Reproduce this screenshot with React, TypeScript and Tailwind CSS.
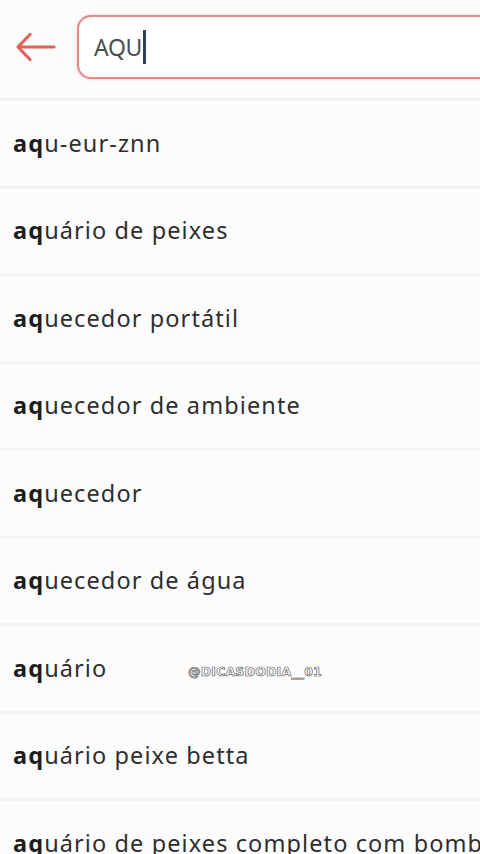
import React from "react";

const suggestions = [
    "aqu-eur-znn",
    "aquário de peixes",
    "aquecedor portátil",
    "aquecedor de ambiente",
    "aquecedor",
    "aquecedor de água",
    "aquário",
    "aquário peixe betta",
    "aquário de peixes completo com bomba",
];

const BackArrow = () => (
    <svg width="44" height="32" viewBox="0 0 44 32" fill="none">
        <path
            d="M40 16H4M16 3.5L4 16l12 12.5"
            stroke="#e2615b"
            strokeWidth="3.2"
            strokeLinecap="round"
            strokeLinejoin="round"
        />
    </svg>
);

const App = () => {
    return (
        <div
            className="relative w-[480px] h-[854px] overflow-hidden bg-[#fdfcfd]"
            style={{ fontFamily: '"Noto Sans", "Open Sans", sans-serif' }}
        >
            <div className="flex items-center h-[98px] pl-[14px] pb-[4px]">
                <BackArrow />
                <div className="ml-[19px] flex-1 h-[64px] -mr-[20px] rounded-[14px] border-2 border-[#e38c86] shadow-[0_0_3px_rgba(230,120,120,0.35)] bg-white flex items-center pl-[15px]">
                    <span className="text-[23px] text-[#4e4e4e] tracking-[-0.3px]">AQU</span>
                    <span className="w-[3px] h-[34px] bg-[#34405a] ml-[1px]" />
                </div>
            </div>
            <div className="flex flex-col">
                {suggestions.map((item, index) => (
                    <div
                        key={index}
                        className="h-[87.5px] shrink-0 border-t-[3px] border-[#f4f2f5] flex items-center pl-[13px] whitespace-nowrap"
                    >
                        <span className="text-[23.5px] tracking-[1.1px] text-[#2e2e2e]">
                            <span className="font-bold text-[#1d1d1d]">aq</span>
                            {item.slice(2)}
                        </span>
                    </div>
                ))}
            </div>
            <div
                className="absolute left-[188px] top-[663px] text-[12.5px] font-bold text-white tracking-[0.2px]"
                style={{ WebkitTextStroke: "0.7px #666", fontFamily: '"DejaVu Sans", sans-serif' }}
            >
                @DICASDODIA__01
            </div>
        </div>
    );
};

export default App;
